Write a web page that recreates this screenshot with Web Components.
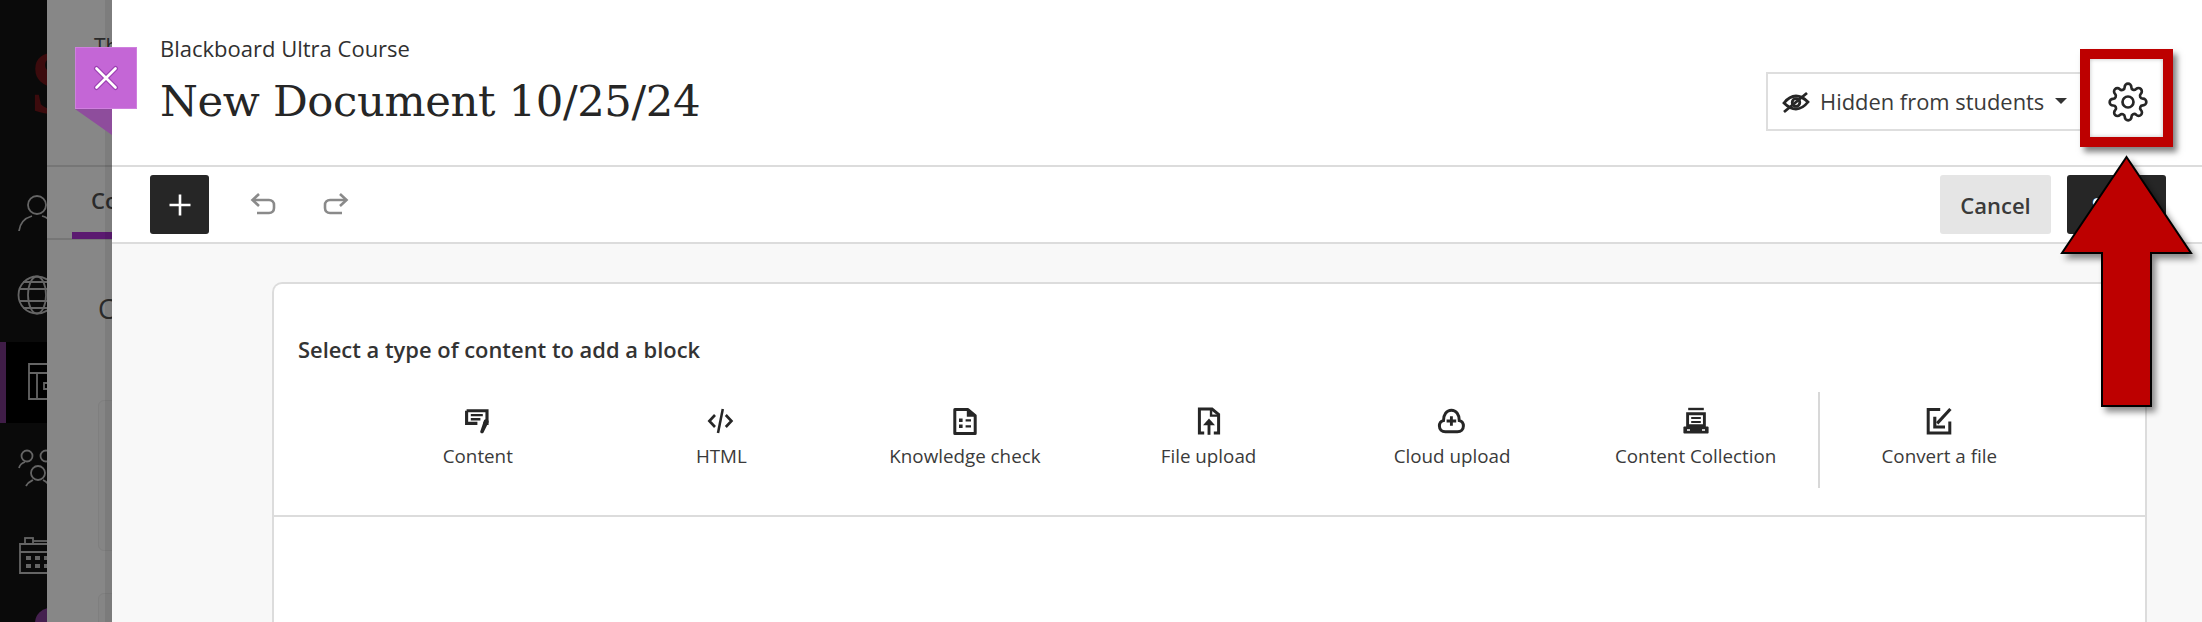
<!DOCTYPE html>
<html lang="en">
<head>
<meta charset="utf-8">
<title>New Document</title>
<style>
html,body{margin:0;padding:0;width:2202px;height:622px;overflow:hidden;background:#fff;}
body{font-family:"Open Sans","Noto Sans",sans-serif;color:#262626;}
</style>
</head>
<body>
<bb-app></bb-app>
<script>
const ICONS={
content:'<path d="M3 4h17v10.500h-3M3 4v10.500h9" fill="none" stroke="currentColor" stroke-width="2.600"/><path d="M6.500 7.600h10M6.500 11h8" stroke="currentColor" stroke-width="2" fill="none"/><path d="M17.600 11.600c1-1 3-.4 3.600 .6.4.8.2 1.400-.2 2l-4 8c-.3.6-1.600 .8-2.200.2-.5-.5-.5-1-.3-1.500z" fill="currentColor"/>',
html:'<path d="M7.500 7.500 2.800 12.500l4.700 5M16.500 7.500l4.700 5-4.700 5" fill="none" stroke="currentColor" stroke-width="2.200"/><path d="M14 2.500 10 22.500" stroke="currentColor" stroke-width="2.100" fill="none"/>',
check:'<path d="M4 3h11l6 5v15H4z" fill="none" stroke="currentColor" stroke-width="2.500" stroke-linejoin="round"/><path d="M14 3v6h7z" fill="currentColor"/><path d="M7.500 10.500h3v2.800h-3zM13 11h4.500v2H13zM7.500 15.500h3v2.800h-3zM13 16h4.500v2H13z" fill="currentColor"/>',
file:'<path d="M8.500 22.500H4.500V2.500H15L20.500 7v15.500h-4" fill="none" stroke="currentColor" stroke-width="2.500"/><path d="M14.200 2.500v5.500h6" fill="none" stroke="currentColor" stroke-width="2"/><path d="M12.500 24V13.500" stroke="currentColor" stroke-width="2.400"/><path d="M7.500 16 12.500 10.500l5 5.500z" fill="currentColor"/>',
cloud:'<path d="M7 21.500c-3 0-5-2.200-5-4.800 0-2.300 1.600-4.100 3.400-4.500C5.400 7.200 8 3.500 12 3.500s6.600 3.700 6.600 8.700c1.800.4 3.400 2.200 3.400 4.500 0 2.600-2 4.800-5 4.800z" fill="none" stroke="currentColor" stroke-width="2.500"/><path d="M12 8.500v8M8 12.500h8" stroke="currentColor" stroke-width="2.400"/>',
coll:'<path d="M6 2.500h13" stroke="currentColor" stroke-width="2"/><path d="M5.500 6.500h14v10h-14z" fill="none" stroke="currentColor" stroke-width="2.400"/><path d="M8.500 10h8M8.500 13.300h8" stroke="currentColor" stroke-width="1.800"/><path d="M3 17h19c.6 0 1 .4 1 1v4c0 .6-.4 1-1 1H3c-.6 0-1-.4-1-1v-4c0-.6.4-1 1-1z" fill="currentColor"/><path d="M5 20h2.500M17.500 20h2.500" stroke="#fff" stroke-width="1.400"/>',
convert:'<path d="M13.500 3H3.500v19.500h18V13" fill="none" stroke="currentColor" stroke-width="2.500"/><path d="M22 2.500 11 14.500" stroke="currentColor" stroke-width="2.600" fill="none"/><path d="M9 9v8.500h8.500" fill="none" stroke="currentColor" stroke-width="2.600"/>'
};
function def(name,html){
  customElements.define(name,class extends HTMLElement{
    constructor(){super();const r=this.attachShadow({mode:'open'});r.innerHTML=typeof html==='function'?html(this):html;}
  });
}
def('bb-sidebar',`<style>
:host{display:block;position:relative;width:47px;height:622px;background:#0a0a0a;overflow:hidden;flex:none}
.s{position:absolute;left:30px;top:36px;font:700 92px/1 "Liberation Serif",serif;color:#3c0b0d}
.bar{position:absolute;left:0;top:342px;width:6px;height:81px;background:#401d48}
.act{position:absolute;left:0;top:342px;width:47px;height:81px;background:#000}
svg{position:absolute;left:0;top:0}
</style>
<div class="act"></div><div class="bar"></div><div class="s">S</div>
<svg width="47" height="622" fill="none" stroke="#656565" stroke-width="1.800">
<circle cx="37" cy="205" r="9"/><path d="M19 231c1-8 6-13 13-15M42 216c4 1 7 3 8 6"/>
<circle cx="37" cy="295" r="18.500"/><ellipse cx="37" cy="295" rx="9" ry="18.500"/><path d="M19 289h38M19 301h38M23 282h30M23 308h30"/>
<path d="M29 364h20v35H29zM29 373h20M37 373v26M44 383h6v6h-6z"/>
<circle cx="27" cy="456" r="5.500"/><circle cx="46" cy="456" r="5.500"/><circle cx="38" cy="473" r="7"/><path d="M19 468c1-4 3-5 6-6M26 486c2-4 5-5 7-6M43 480c2 1 4 2 6 5"/>
<path d="M20 544h30v29H20zM20 552h30"/><rect x="25" y="538" width="8" height="6"/><path d="M33 541h15"/>
<path d="M26 556h5v4h-5zM35 556h5v4h-5zM44 556h5v4h-5zM26 564h5v4h-5zM35 564h5v4h-5zM44 564h5v4h-5z" fill="#656565" stroke="none"/>
<circle cx="50" cy="623" r="15" fill="#45204f" stroke="none"/>
</svg>`);
def('bb-backdrop',`<style>
:host{display:block;position:relative;width:65px;height:622px;background:#878787;overflow:hidden;flex:none;color:#222;font-family:"Open Sans",sans-serif}
.shade{position:absolute;right:0;top:0;bottom:0;width:7px;background:rgba(0,0,0,.07)}
.l1{position:absolute;left:0;right:0;top:165px;height:2px;background:#767676}
.l2{position:absolute;left:0;right:0;top:238px;height:2px;background:#767676}
.ul{position:absolute;left:25px;right:0;top:232px;height:7px;background:#5b1a70}
.t{position:absolute;white-space:nowrap}
.card{position:absolute;left:51px;width:40px;border:1px solid #7f7f7f;border-radius:6px;background:#858585}
</style>
<div class="t" style="left:47px;top:33px;font-size:21px;line-height:26px;color:#2a2a2a">Th</div>
<div class="t" style="left:44px;top:186px;font-size:22px;font-weight:600;line-height:28px;color:#2a2a2a">Co</div>
<div class="t" style="left:51px;top:292px;font-size:27px;line-height:34px;color:#2a2a2a">C</div>
<div class="l1"></div><div class="l2"></div><div class="ul"></div>
<div class="card" style="top:400px;height:149px"></div>
<div class="card" style="top:593px;height:60px"></div>
<div class="shade"></div>`);
def('bb-select',`<style>
:host{display:flex;align-items:center;box-sizing:border-box;width:322px;height:59px;border:2px solid #dedede;background:#fff;padding-left:14px;color:#3a3a3a;font:400 21.900px/1 "Open Sans",sans-serif;white-space:nowrap;flex:none}
svg{flex:none}
.txt{margin-left:10px}
.caret{width:0;height:0;border:6px solid transparent;border-top:6px solid #333;border-bottom:0;margin-left:11px;margin-top:-2px}
</style>
<svg width="28" height="24" viewBox="0 0 28 24" fill="none" stroke="#262626" stroke-width="2.800"><path d="M2 13c4-5 8-7 12-7s8 2 12 6c-4 5-8 7-12 7s-8-2-12-6z"/><circle cx="14" cy="12.500" r="3.800"/><path d="M2 22 25 3"/></svg>
<span class="txt"><slot></slot></span><span class="caret"></span>`);
def('bb-header',`<style>
:host{display:flex;flex:none;align-items:flex-start;justify-content:space-between;box-sizing:border-box;height:167px;border-bottom:2px solid #dcdcdc;padding:33px 0 0 48px;background:#fff}
.sub{font:400 22px/30px "Open Sans",sans-serif;color:#303030;white-space:nowrap}
.title{font:400 43.400px/56px "DejaVu Serif",serif;color:#262626;margin-top:10px;letter-spacing:-.4px;white-space:nowrap}
.right{display:flex;align-items:center;margin-top:39px;padding-right:54px}
svg{display:block;margin-left:20px;flex:none}
</style>
<div><div class="sub"><slot name="sub"></slot></div><div class="title"><slot name="title"></slot></div></div>
<div class="right"><bb-select>Hidden from students</bb-select>
<svg width="40" height="40" viewBox="0 0 24 24" fill="none" stroke="#262626" stroke-width="1.600" stroke-linejoin="round"><circle cx="12" cy="12" r="3.300"/><path d="M19.400 15a1.650 1.650 0 0 0 .33 1.820l.06.06a2 2 0 0 1 0 2.830 2 2 0 0 1-2.830 0l-.06-.06a1.650 1.650 0 0 0-1.820-.33 1.650 1.650 0 0 0-1 1.510V21a2 2 0 0 1-2 2 2 2 0 0 1-2-2v-.09A1.650 1.650 0 0 0 9 19.400a1.650 1.650 0 0 0-1.820.33l-.06.06a2 2 0 0 1-2.830 0 2 2 0 0 1 0-2.830l.06-.06a1.650 1.650 0 0 0 .33-1.820 1.650 1.650 0 0 0-1.510-1H3a2 2 0 0 1-2-2 2 2 0 0 1 2-2h.09A1.650 1.650 0 0 0 4.600 9a1.650 1.650 0 0 0-.33-1.820l-.06-.06a2 2 0 0 1 0-2.830 2 2 0 0 1 2.830 0l.06.06a1.650 1.650 0 0 0 1.820.33H9a1.650 1.650 0 0 0 1-1.510V3a2 2 0 0 1 2-2 2 2 0 0 1 2 2v.09a1.650 1.650 0 0 0 1 1.510 1.650 1.650 0 0 0 1.820-.33l.06-.06a2 2 0 0 1 2.830 0 2 2 0 0 1 0 2.830l-.06.06a1.650 1.650 0 0 0-.33 1.820V9a1.650 1.650 0 0 0 1.510 1H21a2 2 0 0 1 2 2 2 2 0 0 1-2 2h-.09a1.650 1.650 0 0 0-1.510 1z"/></svg></div>`);
def('bb-toolbar',`<style>
:host{display:flex;flex:none;align-items:center;box-sizing:border-box;height:77px;border-bottom:2px solid #dcdcdc;padding:0 36px 0 38px;background:#fff;font:600 22px/1 "Open Sans",sans-serif}
.add{width:59px;height:59px;background:#262626;border-radius:3px;display:flex;align-items:center;justify-content:center}
.undo{margin-left:41px;display:flex;gap:45px}
.sp{flex:1}
.btn{height:59px;display:flex;align-items:center;justify-content:center;border-radius:3px}
.cancel{width:111px;background:#e5e5e5;color:#3a3a3a}
.save{width:99px;background:#262626;color:#fff;margin-left:16px}
</style>
<div class="add"><svg width="24" height="24" viewBox="0 0 24 24"><path d="M12 1.500v21M1.500 12h21" stroke="#fff" stroke-width="2.600"/></svg></div>
<div class="undo">
<svg width="27" height="24" viewBox="0 0 27 24" fill="none" stroke="#8a8a8a" stroke-width="2.600"><path d="M3 7h16c3 0 5 2 5 5v3c0 3-2 5-5 5H7"/><path d="M9 1 2.500 7 9 13" /></svg>
<svg width="27" height="24" viewBox="0 0 27 24" fill="none" stroke="#8a8a8a" stroke-width="2.600"><path d="M24 7H8c-3 0-5 2-5 5v3c0 3 2 5 5 5h12"/><path d="M18 1l6.500 6L18 13"/></svg>
</div>
<div class="sp"></div>
<div class="btn cancel">Cancel</div><div class="btn save">Save</div>`);
def('bb-block',(el)=>`<style>
:host{display:flex;flex-direction:column;align-items:center;flex:1 1 0;min-width:0;box-sizing:border-box;font:400 18.800px/24px "Open Sans",sans-serif;color:#3a3a3a;white-space:nowrap}
svg{display:block;width:30px;height:30px;color:#262626}
.l{margin-top:8px}
</style><svg viewBox="0 0 25 25">${ICONS[el.getAttribute('icon')]}</svg><div class="l"><slot></slot></div>`);
def('bb-card',`<style>
:host{display:block;box-sizing:border-box;height:342px;background:#fff;border:2px solid #dcdcdc;border-radius:10px 10px 0 0;border-bottom:0}
.top{box-sizing:border-box;height:233px;border-bottom:2px solid #dcdcdc;padding:52px 0 0 24px}
h2{margin:0;font:600 21.900px/28px "Open Sans",sans-serif;color:#333;white-space:nowrap}
.row{display:flex;margin:28px 84px 0 58px;height:96px;padding-top:14px;box-sizing:border-box;position:relative}
.sep{position:absolute;left:1462px;top:0;width:2px;height:96px;background:#d8d8d8}
</style>
<div class="top"><h2><slot name="heading"></slot></h2><div class="row"><slot></slot><div class="sep"></div></div></div>`);
def('bb-panel',`<style>
:host{display:flex;flex-direction:column;flex:1;height:622px;background:#f8f8f8;min-width:0}
.main{padding:38px 55px 0 160px;flex:1;min-height:0}
</style><slot name="h"></slot><slot name="t"></slot><div class="main"><slot></slot></div>`);
def('bb-tag',`<style>
:host{position:absolute;left:75px;top:47px;width:62px;height:62px;background:#c466d6;box-shadow:inset 0 0 0 1px #cf80de;display:flex;align-items:center;justify-content:center}
.fold{position:absolute;left:0;top:62px;width:37px;height:26px;background:#8e4d9c;clip-path:polygon(0 0,100% 0,100% 100%)}
</style>
<svg width="26" height="26" viewBox="0 0 26 26" style="margin-top:-1px"><path d="M3.500 3.500l19 19M22.500 3.500l-19 19" stroke="#9c3fb2" stroke-width="5" stroke-linecap="round"/><path d="M3.500 3.500l19 19M22.500 3.500l-19 19" stroke="#fff" stroke-width="2.600" stroke-linecap="round"/></svg><div class="fold"></div>`);
def('bb-callout',`<style>
:host{position:absolute;left:2050px;top:40px;width:152px;height:400px;pointer-events:none}
.box{position:absolute;left:30px;top:9px;width:73px;height:78px;border:10px solid #bd0000;box-shadow:4px 5px 6px rgba(0,0,0,.5),inset 0 0 4px rgba(0,0,0,.25)}
svg{position:absolute;left:0;top:0;overflow:visible}
</style>
<div class="box"></div>
<svg width="152" height="400"><defs><filter id="d" x="-20%" y="-20%" width="140%" height="140%"><feDropShadow dx="4" dy="5" stdDeviation="3" flood-color="#000" flood-opacity=".45"/></filter></defs>
<path d="M76.500 117 12 213h40v153h49V213h40z" fill="#bd0000" stroke="#000" stroke-width="2" filter="url(#d)"/></svg>`);
def('bb-app',`<style>
:host{display:flex;position:relative;width:2202px;height:622px;overflow:hidden}
</style>
<bb-sidebar></bb-sidebar><bb-backdrop></bb-backdrop>
<bb-panel>
<bb-header slot="h"><span slot="sub">Blackboard Ultra Course</span><span slot="title">New Document 10/25/24</span></bb-header>
<bb-toolbar slot="t"></bb-toolbar>
<bb-card>
<span slot="heading">Select a type of content to add a block</span>
<bb-block icon="content">Content</bb-block>
<bb-block icon="html">HTML</bb-block>
<bb-block icon="check">Knowledge check</bb-block>
<bb-block icon="file">File upload</bb-block>
<bb-block icon="cloud">Cloud upload</bb-block>
<bb-block icon="coll">Content Collection</bb-block>
<bb-block icon="convert">Convert a file</bb-block>
</bb-card>
</bb-panel>
<bb-tag></bb-tag>
<bb-callout></bb-callout>`);
</script>
</body>
</html>
